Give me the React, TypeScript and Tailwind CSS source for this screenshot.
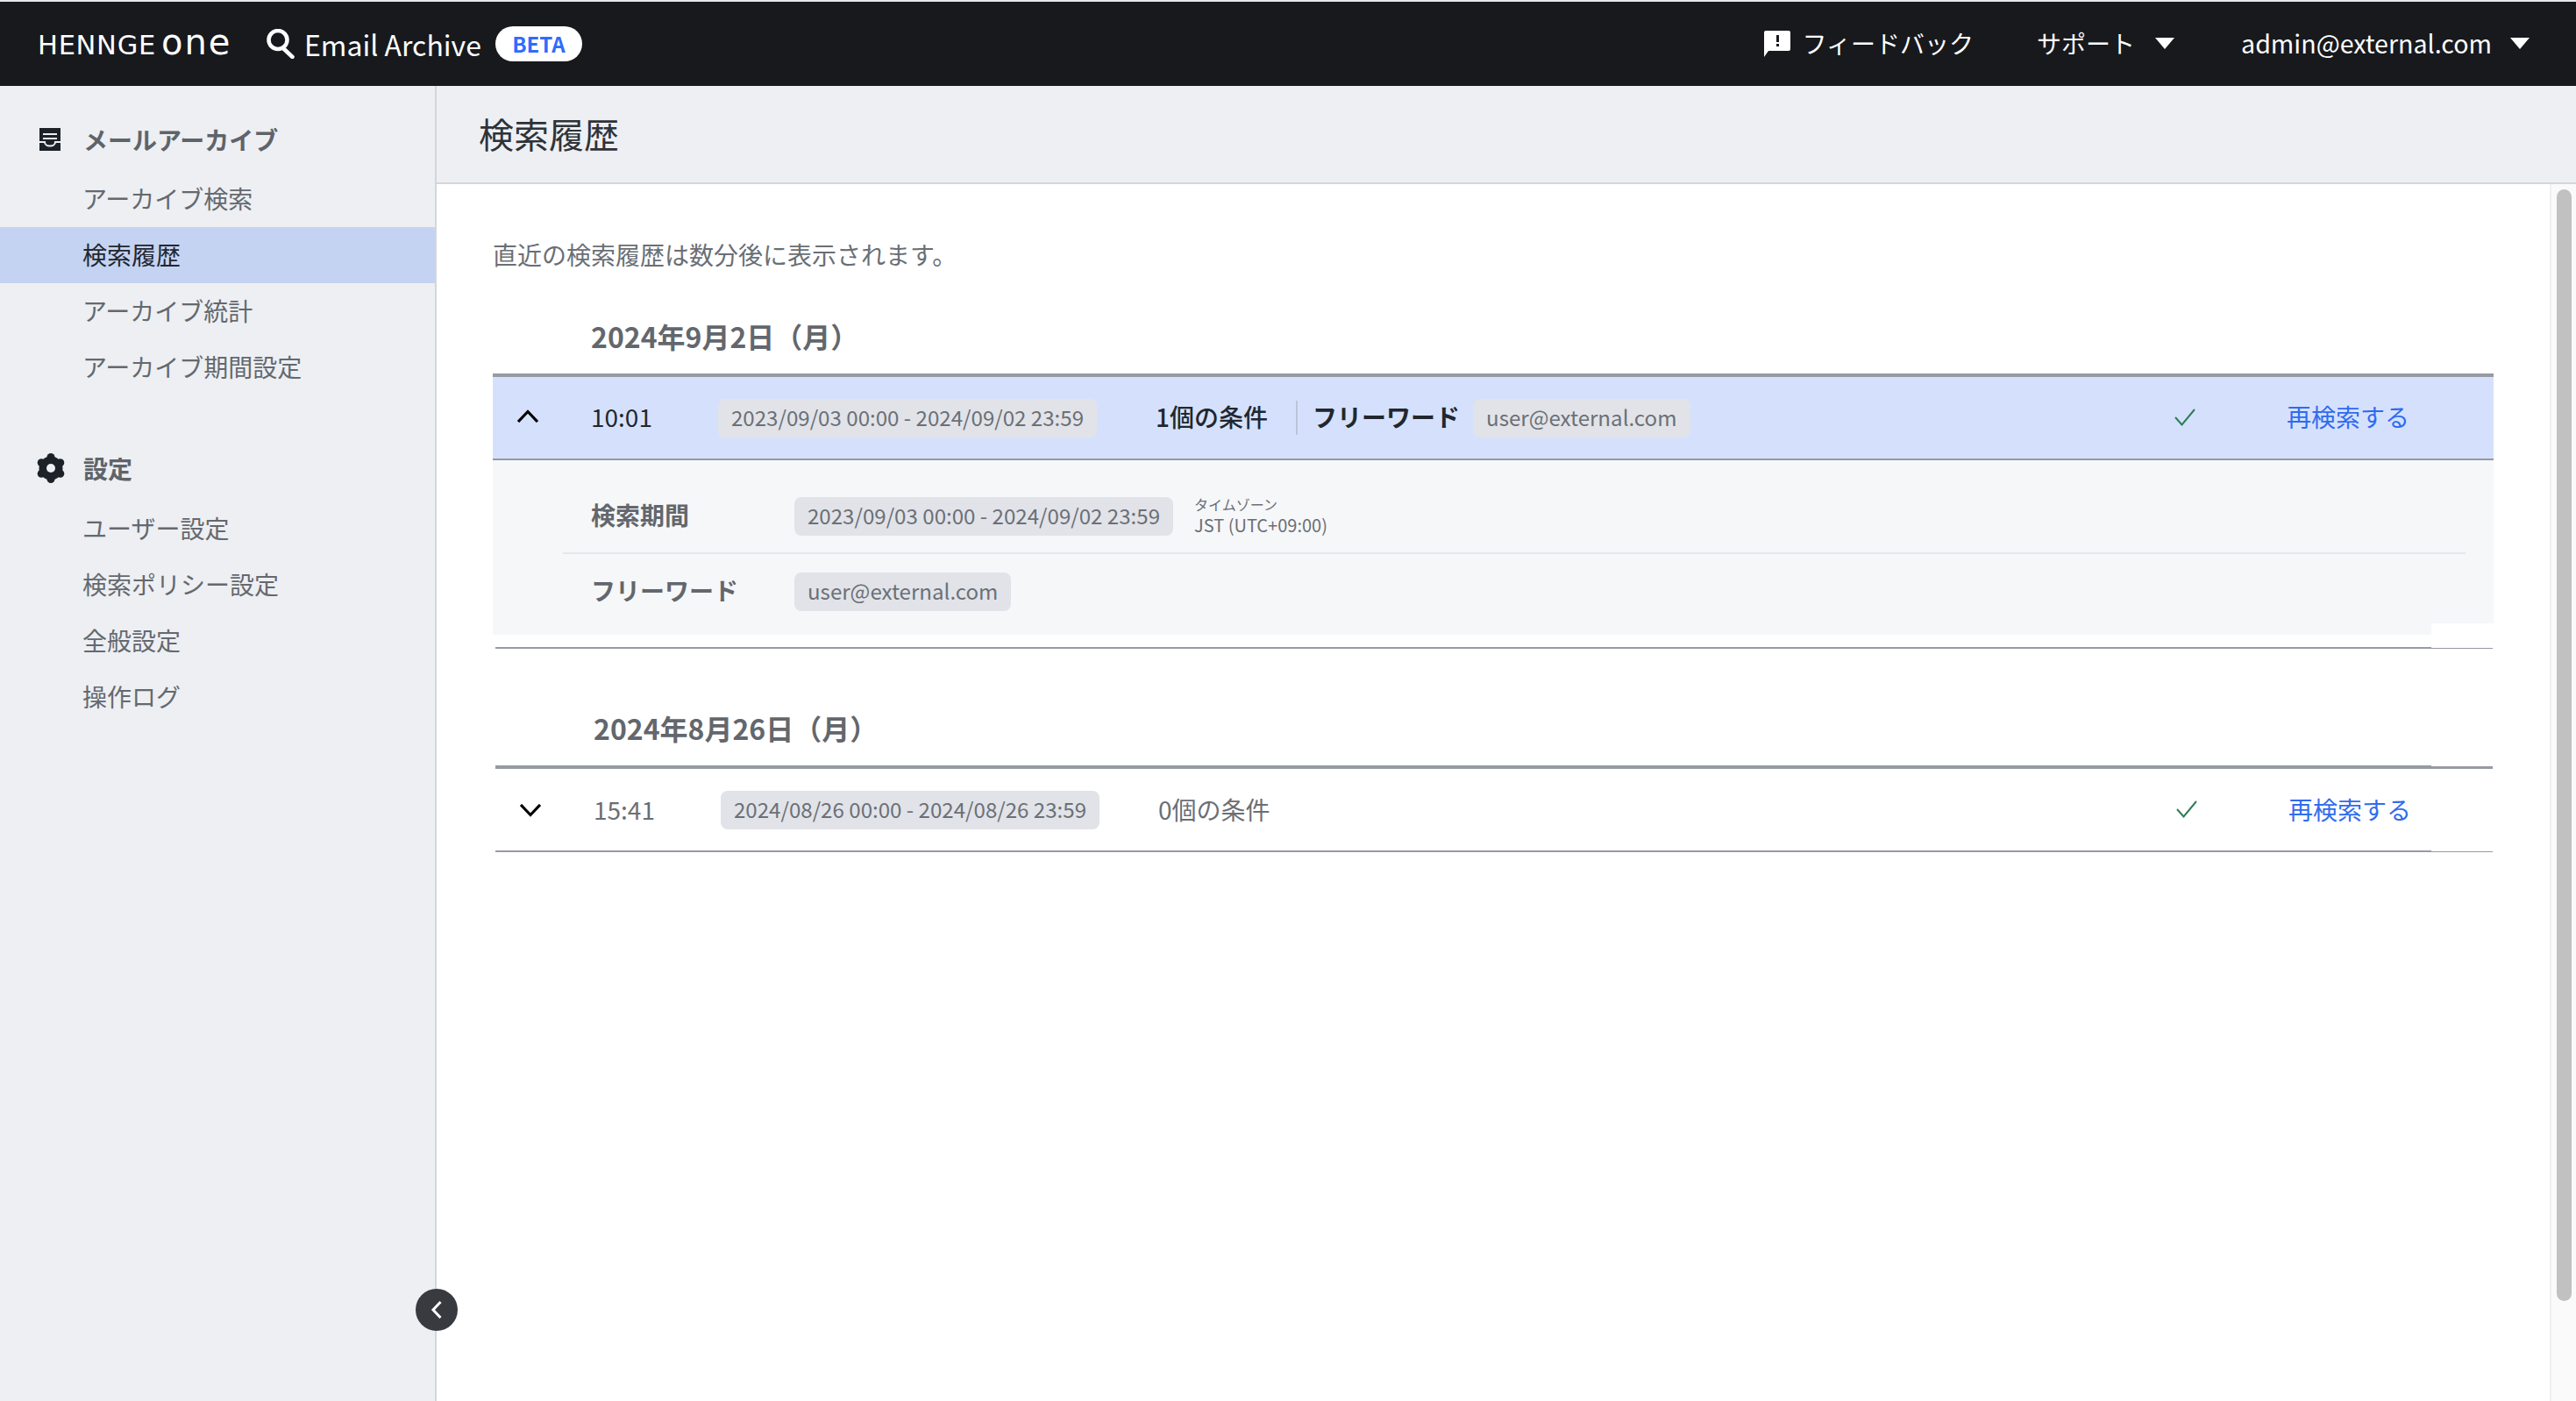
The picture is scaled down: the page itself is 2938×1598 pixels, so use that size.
const SIDE_GROUPS = [
  {
    title: "メールアーカイブ",
    items: ["アーカイブ検索", "検索履歴", "アーカイブ統計", "アーカイブ期間設定"],
  },
  {
    title: "設定",
    items: ["ユーザー設定", "検索ポリシー設定", "全般設定", "操作ログ"],
  },
];

function Chip({ children }: { children: React.ReactNode }) {
  return (
    <span className="flex h-[44px] shrink-0 items-center whitespace-nowrap rounded-[8px] bg-[#e1e3e8] px-[15px] pb-[1px] text-[24.1px] text-[#6b7077]">
      {children}
    </span>
  );
}

function Chevron({ up }: { up?: boolean }) {
  return (
    <svg width="26" height="15" viewBox="0 0 26 15" fill="none" stroke="#000" strokeWidth="3.2">
      <path d={up ? "M2 14 L13 2.5 L24 14" : "M2 1 L13 12.5 L24 1"} />
    </svg>
  );
}

function Check() {
  return (
    <svg width="24" height="20" viewBox="0 0 24 20" fill="none" stroke="#2f7d56" strokeWidth="2" className="shrink-0">
      <path d="M1 10 L8.5 18.5 L23 1" />
    </svg>
  );
}

function Triangle() {
  return (
    <svg width="22" height="13" viewBox="0 0 22 13" fill="#fff">
      <polygon points="0,0 22,0 11,13" />
    </svg>
  );
}

function ArchiveIcon() {
  return (
    <svg width="24" height="26" viewBox="0 0 24 26" className="shrink-0">
      <rect width="24" height="26" fill="#1d2229" />
      <rect x="4" y="6" width="16" height="2" fill="#edeff3" />
      <rect x="4" y="11" width="16" height="2" fill="#edeff3" />
      <path d="M0 16 H6 C6 22, 18 22, 18 16 H24" fill="none" stroke="#edeff3" strokeWidth="2" />
    </svg>
  );
}

function GearIcon() {
  return (
    <svg width="34" height="34" viewBox="0 0 34 34" fill="#1d2229" className="shrink-0">
      <circle cx="17" cy="4.5" r="4.5" />
      <circle cx="17" cy="29.5" r="4.5" />
      <circle cx="6.2" cy="10.75" r="4.5" />
      <circle cx="27.8" cy="10.75" r="4.5" />
      <circle cx="6.2" cy="23.25" r="4.5" />
      <circle cx="27.8" cy="23.25" r="4.5" />
      <circle cx="17" cy="17" r="13.5" />
      <circle cx="17" cy="17" r="5" fill="#edeff3" />
    </svg>
  );
}

function Sidebar() {
  return (
    <aside className="relative flex w-[498px] shrink-0 flex-col border-r-2 border-[#d3d6db] bg-[#edeff3] pt-[29px]">
      {SIDE_GROUPS.map((group, i) => (
        <div key={group.title} className={i === 1 ? "mt-[51px]" : ""}>
          <div className={i === 1 ? "mb-[5px] flex h-[64px] items-center pl-[41px]" : "mb-[4px] flex h-[64px] items-center pl-[41px]"}>
            <span className="flex w-[54px] items-center">{i === 0 ? <span className="ml-[4px]"><ArchiveIcon /></span> : <GearIcon />}</span>
            <span className="text-[28px] font-bold text-[#5f6469]">{group.title}</span>
          </div>
          {group.items.map((item) => (
            <div
              key={item}
              className={
                item === "検索履歴"
                  ? "flex h-[64px] items-center bg-[#c5d3f3] pb-[2px] pl-[94px] text-[28px] text-[#22272e]"
                  : "flex h-[64px] items-center pb-[2px] pl-[94px] text-[28px] text-[#64696f]"
              }
            >
              {item}
            </div>
          ))}
        </div>
      ))}
      <button className="absolute bottom-[80px] right-[-26px] flex h-[48px] w-[48px] items-center justify-center rounded-full bg-[#393a3f]">
        <svg width="14" height="22" viewBox="0 0 14 22" fill="none" stroke="#fff" strokeWidth="3">
          <path d="M11.5 2 L3 11 L11.5 20" />
        </svg>
      </button>
    </aside>
  );
}

function Header() {
  return (
    <header className="flex h-[96px] shrink-0 items-center bg-[#17191d] pl-[43px] pr-[53px] text-white">
      <div className="flex w-[219px] items-baseline pb-[4px] font-['DejaVu_Sans',sans-serif] text-white">
        <span className="text-[30.5px] font-normal leading-none tracking-[0.7px]">HENNGE</span>
        <span className="ml-[6px] text-[40px] font-normal leading-none tracking-[2px]">one</span>
      </div>
      <svg width="32" height="34" viewBox="0 0 32 34" fill="none" stroke="#fff" strokeWidth="4.5" className="ml-[42px] shrink-0">
        <circle cx="13" cy="12.5" r="10.5" />
        <path d="M19 22 L29.5 32" strokeLinecap="round" />
      </svg>
      <span className="ml-[11px] text-[32px]">Email Archive</span>
      <span className="ml-[16px] flex h-[40px] w-[99px] items-center justify-center rounded-full bg-white pb-[1px] text-[24px] font-bold text-[#2f6bff]">
        BETA
      </span>
      <div className="ml-auto flex items-center text-[28px]">
        <svg width="30" height="30" viewBox="0 0 30 30" className="shrink-0">
          <path d="M2 0 H28 a2 2 0 0 1 2 2 V21 a2 2 0 0 1 -2 2 H5 L0 30 V2 a2 2 0 0 1 2 -2 Z" fill="#fff" />
          <rect x="14" y="5" width="3" height="8" fill="#17191d" />
          <rect x="14" y="15" width="3" height="3" fill="#17191d" />
        </svg>
        <span className="ml-[14px] pb-[2px]">フィードバック</span>
        <span className="ml-[72px] pb-[2px]">サポート</span>
        <span className="ml-[23px]"><Triangle /></span>
        <span className="ml-[76px] pb-[2px] text-[28.6px]">admin@external.com</span>
        <span className="ml-[21px]"><Triangle /></span>
      </div>
    </header>
  );
}

function Rule() {
  return (
    <div className="ml-[3px] mr-[1px] flex items-start">
      <div className="h-[2px] flex-1 bg-[#969aa3]" />
      <div className="mt-[1px] h-[1px] w-[70px] bg-[#969aa3]" />
    </div>
  );
}

export default function App() {
  return (
    <div className="flex h-[1598px] w-[2938px] flex-col overflow-hidden bg-white font-['Noto_Sans_CJK_JP',sans-serif]">
      <div className="h-[2px] shrink-0 bg-[#e8e8e8]" />
      <Header />
      <div className="flex min-h-0 flex-1">
        <Sidebar />
        <main className="flex min-w-0 flex-1 flex-col">
          <div className="flex h-[112px] shrink-0 items-center border-b-2 border-[#d3d6db] bg-[#edeff3] pb-[2px] pl-[48px]">
            <h1 className="text-[40px] font-normal text-[#2f3338]">検索履歴</h1>
          </div>
          <div className="flex min-h-0 flex-1">
            <div className="min-w-0 flex-1 px-[64px] pt-[60px]">
              <p className="h-[40px] text-[28px] leading-[40px] text-[#6a6f75]">直近の検索履歴は数分後に表示されます。</p>

              <h2 className="mb-[15px] mt-[45px] h-[56px] pl-[112px] text-[32px] font-bold leading-[56px] text-[#63676d]">
                2024年9月2日（月）
              </h2>
              <div className="box-content flex h-[93px] items-center border-t-4 border-[#969aa3] bg-[#d5e1fc] text-[28px]">
                <span className="flex w-[112px] justify-center pb-[5px] pr-[32px]"><Chevron up /></span>
                <span className="w-[145px] pb-[4px] text-[#22272e]">10:01</span>
                <Chip>2023/09/03 00:00 - 2024/09/02 23:59</Chip>
                <span className="ml-[67px] w-[125px] whitespace-nowrap pb-[4px] font-medium text-[#22272e]">1個の条件</span>
                <span className="ml-[35px] h-[39px] w-[2px] bg-[#bcc5d8]" />
                <span className="ml-[17px] w-[164px] whitespace-nowrap pb-[4px] font-bold text-[#22272e]">フリーワード</span>
                <span className="ml-[19px]"><Chip>user@external.com</Chip></span>
                <span className="flex flex-1 justify-end pb-[2px]"><Check /></span>
                <a className="ml-[104px] mr-[96px] pb-[4px] text-[#2f6bef]">再検索する</a>
              </div>
              <div className="h-[2px] bg-[#969aa3]" />
              <div className="h-[186px] bg-[#f6f7f9] pt-[42px] text-[28px]">
                <div className="flex h-[44px] items-center pl-[112px]">
                  <span className="w-[232px] pb-[4px] font-bold text-[#63676d]">検索期間</span>
                  <Chip>2023/09/03 00:00 - 2024/09/02 23:59</Chip>
                  <div className="ml-[24px] flex flex-col pb-[2px] text-[#6a6f75]">
                    <span className="text-[16px] leading-[22px]">タイムゾーン</span>
                    <span className="text-[20px] leading-[26px]">JST (UTC+09:00)</span>
                  </div>
                </div>
                <div className="ml-[80px] mr-[32px] mt-[19px] h-[2px] bg-[#e5e7eb]" />
                <div className="mt-[21px] flex h-[44px] items-center pl-[112px]">
                  <span className="w-[232px] pb-[4px] font-bold text-[#63676d]">フリーワード</span>
                  <Chip>user@external.com</Chip>
                </div>
              </div>
              <div className="mr-[71px] h-[13px] bg-[#f6f7f9]" />
              <div className="mt-[14px]"><Rule /></div>

              <h2 className="mb-[15px] ml-[3px] mt-[62px] h-[56px] pl-[112px] text-[32px] font-bold leading-[56px] text-[#63676d]">
                2024年8月26日（月）
              </h2>
              <div className="ml-[3px] mr-[1px] flex items-start">
                <div className="h-[4px] flex-1 bg-[#969aa3]" />
                <div className="mt-[1px] h-[3px] w-[70px] bg-[#969aa3]" />
              </div>
              <div className="ml-[3px] mr-[1px] flex h-[93px] items-center text-[28px]">
                <span className="flex w-[112px] justify-center pr-[32px] pt-[2px]"><Chevron /></span>
                <span className="w-[145px] pb-[2px] text-[#6a6f75]">15:41</span>
                <Chip>2024/08/26 00:00 - 2024/08/26 23:59</Chip>
                <span className="ml-[67px] whitespace-nowrap pb-[2px] text-[#6a6f75]">0個の条件</span>
                <span className="flex flex-1 justify-end pb-[2px]"><Check /></span>
                <a className="ml-[104px] mr-[93px] pb-[2px] text-[#2f6bef]">再検索する</a>
              </div>
              <Rule />
            </div>
            <div className="w-[30px] shrink-0 border-l-2 border-[#f0f0f0] bg-[#fafafa] pl-[6px] pt-[6px]">
              <div className="h-[1268px] w-[17px] rounded-full bg-[#c1c1c1]" />
            </div>
          </div>
        </main>
      </div>
    </div>
  );
}
